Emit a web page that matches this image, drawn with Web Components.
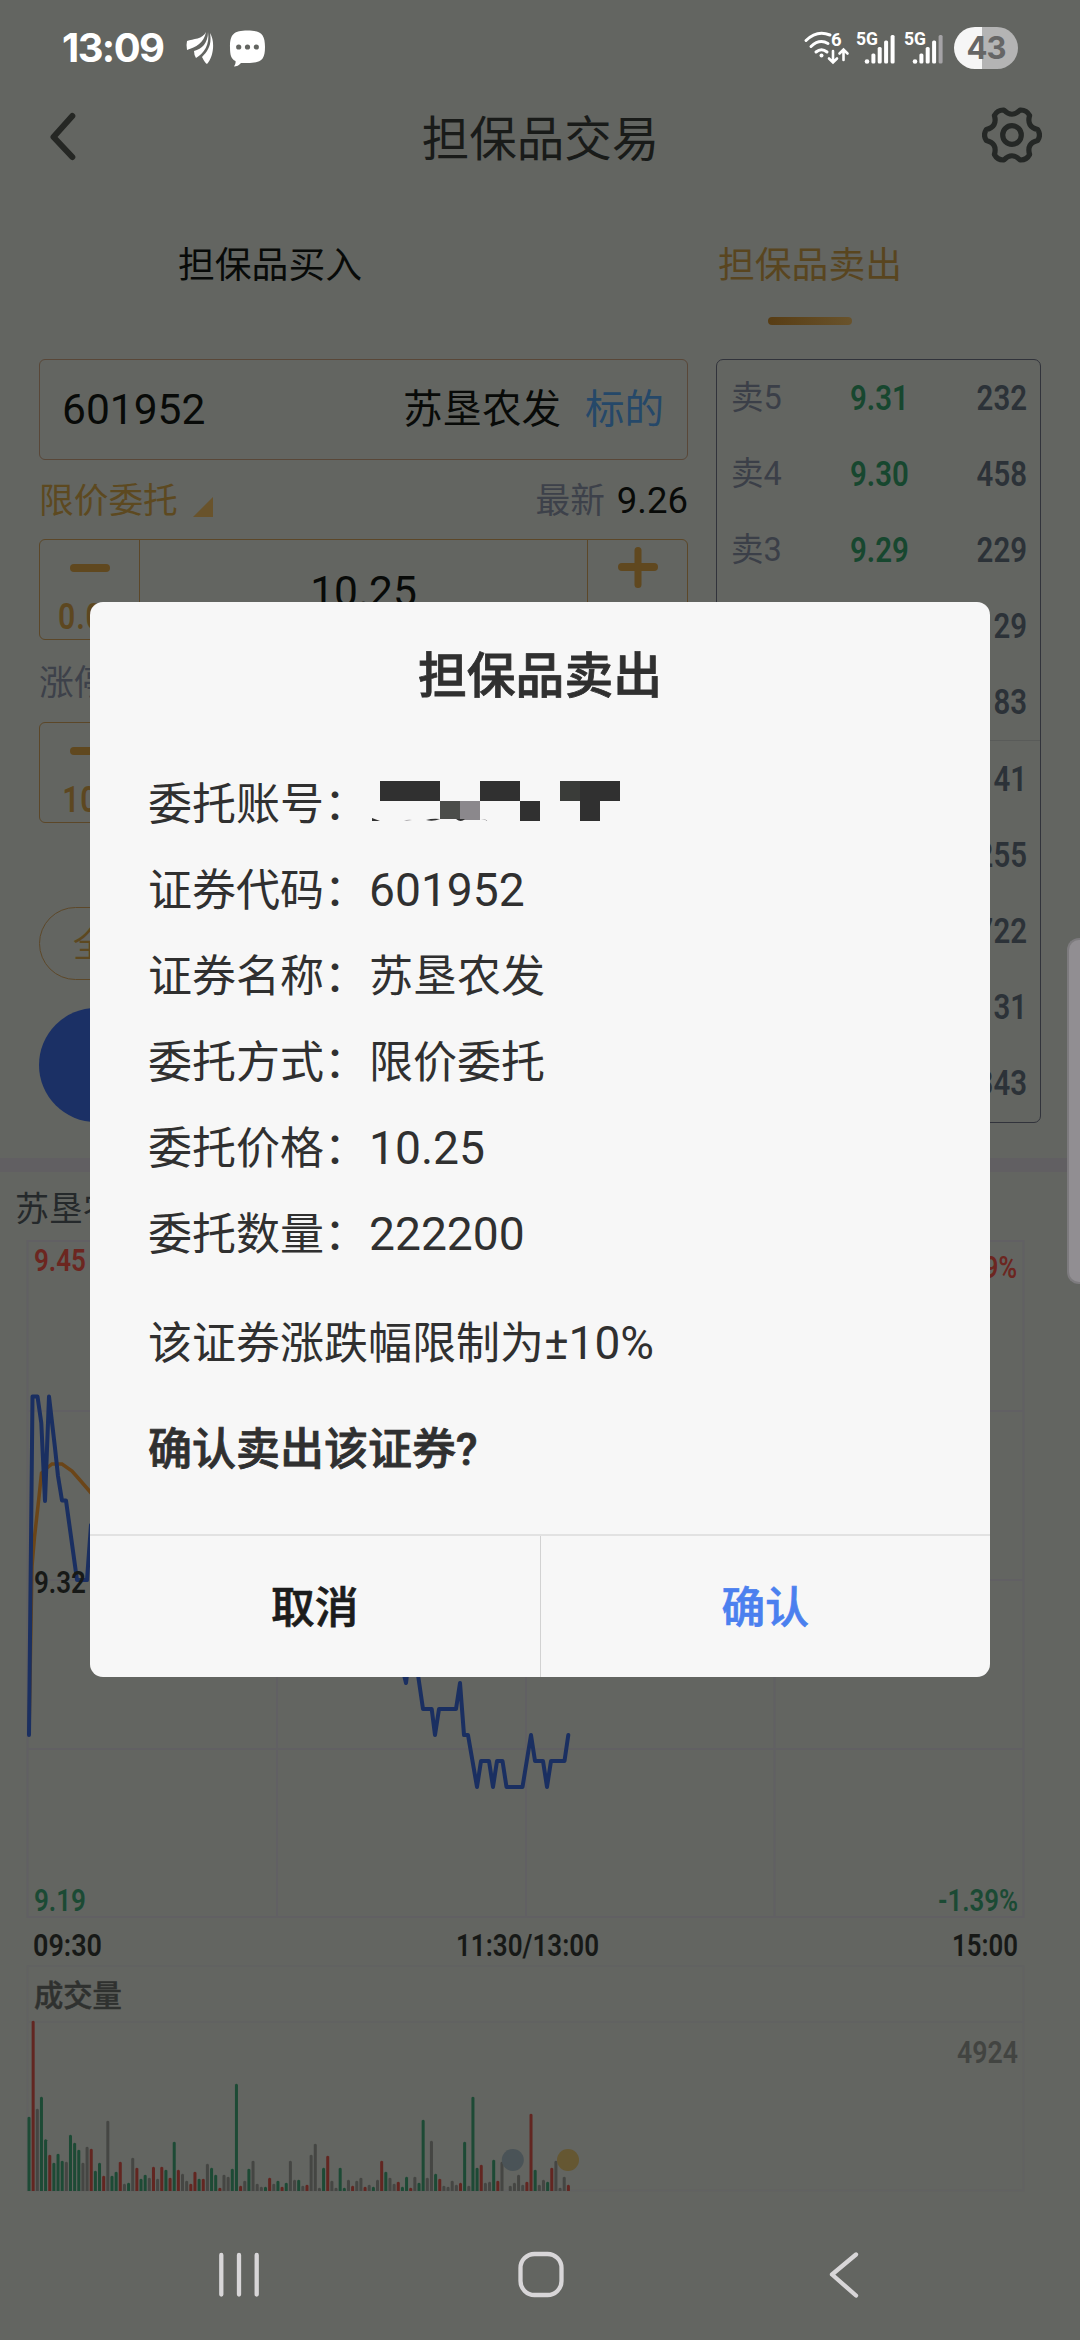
<!DOCTYPE html>
<html lang="zh-CN">
<head>
<meta charset="utf-8">
<title>担保品交易</title>
<style>
  body {
    margin: 0;
    width: 1080px;
    height: 2340px;
    overflow: hidden;
    background: #636561;
    font-family: Roboto, "Noto Sans CJK SC", sans-serif;
  }
</style>
</head>
<body>
<trade-app></trade-app>

<script>
const define = (name, template, setup) => {
  customElements.define(name, class extends HTMLElement {
    connectedCallback() {
      if (this.shadowRoot) return;
      this.attachShadow({ mode: 'open' }).innerHTML = template(this);
      if (setup) setup(this);
    }
  });
};

// narrow figures used for prices and volumes
define('slim-num', el => `
  <style>
    :host { display: inline-block; font-weight: 600; white-space: nowrap; }
    span {
      display: inline-block;
      transform: scaleX(0.84);
      transform-origin: ${el.getAttribute('origin') || 'left'} center;
    }
  </style>
  <span><slot></slot></span>
`);

define('signal-bars', el => `
  <style>
    :host { display: block; width: 40px; height: 34px; }
    svg { display: block; overflow: visible; }
  </style>
  <svg width="40" height="34" fill="#fff">
    <text x="0" y="14" font-family="Roboto" font-weight="700" font-size="18.5" textLength="22" lengthAdjust="spacingAndGlyphs">5G</text>
    <circle cx="11" cy="30.5" r="2.3"/>
    <rect x="15.4" y="22.5" width="4" height="10" rx="1.5"/>
    <rect x="21.7" y="16" width="4" height="16.5" rx="1.5"/>
    <rect x="28.1" y="9.5" width="4" height="23" rx="1.5"/>
    <rect x="34.6" y="4" width="4" height="28.5" rx="1.5" fill="${el.hasAttribute('weak') ? '#a5a3a6' : '#fff'}"/>
  </svg>
`);

define('status-bar', () => `
  <style>
    :host {
      display: flex;
      align-items: center;
      height: 96px;
      padding: 0 62px;
      box-sizing: border-box;
      color: #fff;
    }
    .time { font: 700 40px/48px Inter, Roboto, sans-serif; letter-spacing: -1.6px; width: 124px; }
    .chat { margin-left: 15px; }
    .wifi { margin-left: auto; overflow: visible; }
    signal-bars { margin-left: 8px; }
    .battery {
      width: 64px;
      height: 42px;
      margin-left: 10px;
      border-radius: 21px;
      background: linear-gradient(90deg, #f6f6f6 43%, #b4b4b4 43%);
      color: #666;
      font: 700 31px/42px Inter, Roboto, sans-serif;
      letter-spacing: -1px;
      text-align: center;
    }
  </style>
  <span class="time">13:09</span>
  <svg width="28" height="34" viewBox="0 0 28 34" fill="#fff">
    <path d="M20 1 C17 8 7 8 1 10 Q0 14 1 19 C10 16 18 12 20 1Z"/>
    <path d="M22 1 C22 12 16 18 8 20 Q8 24 10 27 C18 22 24 14 22 1Z"/>
    <path d="M24 2 C26 14 22 20 16 26 Q19 32 21 33 C28 25 29 10 24 2Z"/>
  </svg>
  <svg class="chat" width="37" height="37" viewBox="0 0 37 37">
    <path d="M18.5 0.5 C32 0.5 36 4 36 17 C36 30 32 33 18.5 33 C15 33 13 33 12 33 Q9 36.5 5 36.5 Q7 34 6.5 31 C2 29 1 25 1 17 C1 4 5 0.5 18.5 0.5Z" fill="#fff"/>
    <g fill="#636561"><circle cx="9.7" cy="17" r="2.6"/><circle cx="18.5" cy="17" r="2.6"/><circle cx="27.3" cy="17" r="2.6"/></g>
  </svg>
  <svg class="wifi" width="44" height="34" viewBox="0 0 44 34" fill="none" stroke="#fff" stroke-width="3" stroke-linecap="round">
    <path d="M2 9.5 Q13 -1.5 26 4"/>
    <path d="M7 15.5 Q15.5 7.5 24 12.5"/>
    <path d="M12 21 Q17.5 16.5 23 21"/>
    <circle cx="17.5" cy="24.5" r="2" fill="#fff" stroke="none"/>
    <path d="M29 20 V31 M25 27.5 L29 31.5 L33 27.5 M39.5 29 V19 M35.5 22.5 L39.5 18.5 L43.5 22.5" stroke-width="2.6"/>
    <text x="27" y="14.5" font-family="Roboto" font-weight="700" font-size="18.5" fill="#fff" stroke="none">6</text>
  </svg>
  <signal-bars></signal-bars>
  <signal-bars weak></signal-bars>
  <div class="battery">43</div>
`);

define('gear-icon', () => `
  <style>:host { display: block; height: 60px; } svg { display: block; }</style>
  <svg width="60" height="60" viewBox="-30 -29 60 60" fill="none" stroke="#252826" stroke-width="5.2" stroke-linejoin="round">
    <path/>
    <circle r="9.3"/>
  </svg>
`, el => {
  const at = (deg, r) => {
    const a = deg * Math.PI / 180;
    return `${(Math.cos(a) * r).toFixed(2)} ${(Math.sin(a) * r).toFixed(2)}`;
  };
  let d = `M${at(-12, 26.3)}`;
  for (let deg = 0; deg < 360; deg += 60) {
    d += `Q${at(deg, 29.2)} ${at(deg + 12, 26.3)}Q${at(deg + 30, 16.5)} ${at(deg + 48, 26.3)}`;
  }
  el.shadowRoot.querySelector('path').setAttribute('d', d + 'Z');
});

define('page-header', () => `
  <style>
    :host {
      display: grid;
      grid-template-columns: 60px 1fr 60px;
      align-items: center;
      height: 80px;
      padding: 0 38px 0 39px;
    }
    h1 { margin: 0; color: #191b19; font-size: 47.5px; font-weight: 400; line-height: 60px; text-align: center; padding-top: 7px; }
  </style>
  <svg width="60" height="60" viewBox="0 0 60 60" fill="none" stroke="#252724" stroke-width="6" stroke-linecap="round" stroke-linejoin="round">
    <path d="M33.3 10 L14.5 31 L33.3 51"/>
  </svg>
  <h1><slot></slot></h1>
  <gear-icon></gear-icon>
`);

define('trade-tab', el => `
  <style>
    :host {
      display: flex;
      flex-direction: column;
      align-items: center;
      flex: 1;
      padding-top: 65px;
      color: ${el.hasAttribute('active') ? '#59451f' : '#080a08'};
      font-size: 36.8px;
      line-height: 50px;
    }
    i {
      width: 84px;
      height: 8px;
      margin-top: 26px;
      border-radius: 4px;
      background: linear-gradient(90deg, #583d14, #69532c);
    }
  </style>
  <slot></slot>
  ${el.hasAttribute('active') ? '<i></i>' : ''}
`);

define('stock-field', () => `
  <style>
    :host {
      display: flex;
      align-items: center;
      height: 101px;
      box-sizing: border-box;
      padding: 0 23px 0 22px;
      border: 1.5px solid #594738;
      border-radius: 6px;
      color: #080a08;
      font-size: 39.5px;
      line-height: 96px;
    }
    .code { flex: 1; font-size: 42.5px; line-height: 102px; }
    .tag { margin-left: 24px; color: #254869; }
  </style>
  <span class="code"><slot name="code"></slot></span>
  <slot></slot>
  <span class="tag"><slot name="tag"></slot></span>
`);

define('field-label', () => `
  <style>
    :host {
      display: flex;
      align-items: center;
      box-sizing: border-box;
      padding-bottom: 3px;
      font-size: 34.7px;
      color: #3d414a;
    }
  </style>
  <slot></slot>
`);

define('price-stepper', el => `
  <style>
    :host {
      display: grid;
      grid-template-columns: 100px 1fr 100px;
      height: 101px;
      box-sizing: border-box;
      border: 1.5px solid #5c4728;
      border-radius: 6px;
      color: #5d4720;
      font-size: 36px;
    }
    .side { text-align: center; }
    .left { border-right: 1.5px solid #5c4728; }
    .right { border-left: 1.5px solid #5c4728; }
    svg { display: block; margin: 7px auto 0; }
    .num { margin-top: 7px; line-height: 42px; letter-spacing: 1px; }
    .value { color: #080a08; font-size: 42.5px; line-height: 103px; text-align: center; }
  </style>
  <div class="side left">
    <svg width="40" height="42" fill="#60481f"><rect y="17" width="40" height="8" rx="4"/></svg>
    <slim-num class="num" origin="center">${el.getAttribute('step')}</slim-num>
  </div>
  <div class="value">${el.getAttribute('value') || ''}</div>
  <div class="side right">
    <svg width="40" height="42" fill="#60481f"><rect y="16" width="40" height="8" rx="4"/><rect x="16.5" width="7" height="41" rx="3.5"/></svg>
  </div>
`);

define('order-book', () => `
  <style>
    :host {
      display: grid;
      grid-auto-rows: 76.2px;
      height: 764px;
      box-sizing: border-box;
      border: 1.5px solid #31333b;
      border-radius: 7px;
      font-size: 35px;
    }
    .row {
      display: grid;
      grid-template-columns: 119px 1fr 80px;
      align-items: center;
      padding: 0 13px 0 14px;
      color: #2c3238;
    }
    .row:nth-of-type(5) { border-bottom: 1.5px solid #595b59; }
    .label { padding-bottom: 8px; color: #3b3f48; font-size: 32.5px; }
    .price { color: #17472f; }
    .qty { text-align: right; }
  </style>
`, el => {
  // [level, price, quantity], sells above buys
  const rows = [
    ['卖5', '9.31', 232], ['卖4', '9.30', 458], ['卖3', '9.29', 229],
    ['', '', 29], ['', '', 83],
    ['', '', 41], ['', '', 255], ['', '', 722], ['', '', 31], ['', '', 343]
  ];
  el.shadowRoot.innerHTML += rows.map(([label, price, qty]) => `
    <div class="row">
      <span class="label">${label}</span>
      <slim-num class="price">${price}</slim-num>
      <slim-num class="qty" origin="right">${qty}</slim-num>
    </div>`).join('');
});

define('trade-panel', () => `
  <style>
    :host {
      display: grid;
      grid-template-columns: 649px 325px;
      column-gap: 28px;
      padding: 21px 39px 35px;
    }
    .form { display: flex; flex-direction: column; }
    .type { height: 79px; color: #5d4920; }
    .type svg { margin: 18px 0 0 15px; }
    .last { margin-left: auto; color: #3d414a; }
    .last b { margin-left: 12px; color: #080a08; font-weight: 400; font-size: 36.5px; }
    .limit { height: 82px; }
    .pill {
      width: 142px;
      height: 73px;
      margin-top: 84px;
      padding-left: 33px;
      box-sizing: border-box;
      border: 1.5px solid #5d4829;
      border-radius: 37px;
      color: #5d4820;
      font-size: 34.5px;
      line-height: 74px;
    }
    .submit { height: 114px; margin-top: 28px; border-radius: 57px; background: #1b3065; }
  </style>
  <div class="form">
    <stock-field><span slot="code">601952</span>苏垦农发<span slot="tag">标的</span></stock-field>
    <field-label class="type">
      限价委托
      <svg width="20" height="20"><path d="M20 0 V20 H0Z" fill="#69532b"/></svg>
      <span class="last">最新<b>9.26</b></span>
    </field-label>
    <price-stepper step="0.01" value="10.25"></price-stepper>
    <field-label class="limit">涨停</field-label>
    <price-stepper step="100"></price-stepper>
    <div class="pill">全</div>
    <div class="submit"></div>
  </div>
  <order-book></order-book>
`);

define('price-chart', () => `
  <style>
    :host { display: block; height: 806px; border-top: 14px solid #615f62; box-sizing: border-box; }
    .name { height: 68px; padding: 4px 0 0 15px; box-sizing: border-box; color: #25292b; font-size: 34px; line-height: 66px; }
    svg { display: block; font: 600 30.8px Roboto, sans-serif; }
  </style>
  <div class="name">苏垦农发</div>
  <svg width="1080" height="724" viewBox="0 1240 1080 724">
    <path d="M27.5 1241 H1023.5 V1917 H27.5Z M27.5 1411 H1023.5 M27.5 1580 H1023.5 M27.5 1749 H1023.5 M277 1241 V1917 M526 1241 V1917 M774.5 1241 V1917" fill="none" stroke="#616063" stroke-width="2"/>
    <path d="M29 1735 L32 1566 L34.5 1537 L39 1497 L41.5 1473 L47 1468 L52 1464 H62 L72 1471 L79 1479 L92 1494" fill="none" stroke="#6b4518" stroke-width="3.5"/>
    <path d="M29 1735 L32.5 1396.5 H37.5 L41.3 1423 L45 1501 L49 1396.5 L55 1448 L58 1476 L62 1500.5 H66 L77 1580 H87 L91 1525 L398 1650 L406 1683 L411 1640 L417 1668 L423 1709 H431.7 L435 1735 L439 1709 H456 L460 1683 L464 1735 H468 L477 1787 L481 1761 H489 L493 1787 L497 1761 H502.5 L506.5 1787 H522.5 L531 1735 L535 1761 H543 L547 1787 L551 1761 H564.5 L568.3 1735" fill="none" stroke="#1a2f61" stroke-width="4" stroke-linecap="round" stroke-linejoin="round"/>
    <g class="labels"></g>
  </svg>
`, el => {
  const red = '#6c2620', green = '#1b4a34', ink = '#171917';
  // text, left, baseline, width, colour
  const labels = [
    ['9.45', 34, 1271, 52, red], ['1.39%', 948, 1278, 69, red],
    ['9.32', 34, 1593, 52, ink],
    ['9.19', 34, 1911, 52, green], ['-1.39%', 938, 1911, 80, green],
    ['09:30', 33, 1956, 69, ink], ['11:30/13:00', 456, 1956, 143, ink], ['15:00', 952, 1956, 66, ink]
  ];
  el.shadowRoot.querySelector('.labels').innerHTML = labels.map(([t, x, y, w, c]) =>
    `<text x="${x}" y="${y}" textLength="${w}" lengthAdjust="spacingAndGlyphs" fill="${c}">${t}</text>`).join('');
});

define('volume-chart', () => `
  <style>
    :host { display: block; height: 236px; }
    svg { display: block; }
  </style>
  <svg width="1080" height="236" viewBox="0 1964 1080 236">
    <path d="M27.5 1966 H1023.5 V2190.5 H27.5Z M27.5 2022 H1023.5" fill="none" stroke="#616262" stroke-width="1.5"/>
    <g class="bars"></g>
    <circle cx="512.8" cy="2160" r="11" fill="#4a5357"/>
    <circle cx="568" cy="2160" r="11" fill="#655732"/>
    <text x="34" y="2006" font-family="Noto Sans CJK SC" font-weight="500" font-size="29.3" fill="#2f312f" stroke="#2f312f" stroke-width="0.5">成交量</text>
    <text x="957" y="2063" textLength="61" lengthAdjust="spacingAndGlyphs" font-family="Roboto" font-weight="600" font-size="30.8" fill="#424441">4924</text>
  </svg>
`, el => {
  // height of each minute's bar in thirds of a pixel: g falls, r rises, k is flat
  const volumes = `223g 511r 247k 283g 155g 109r 85g 112g 91g 88k 169g 145g 124g 85k 133k 127r 61g 85g 46r 211k
    46g 58g 88r 22k 25g 100k 70r 37g 49g 40k 73r 37k 73r 64g 40r 148g 64r 52k 31k 22r
    58r 37g 37r 82k 70g 49g 10r 49k 43k 67g 322g 16r 31k 67g 91k 22k 13k 13g 40r 22k
    31g 13r 25g 91k 34k 34g 16k 19r 109k 142k 10k 70g 106r 31k 10k 70g 10g 34k 16r 31k
    40k 13r 19k 13g 34k 91r 58g 40k 22k 28r 13g 43g 10r 43k 25g 214g 40k 151k 52g 37r
    16k 13k 31k 19k 25r 148g 16k 283g 70g 79r 25k 28k 94g 31r 88k 0k 16k 25k 49k 19k
    28r 232r 64g 19k 34k 28g 70r 91k 10k 43k 19r`.split(/\s+/);
  const colors = { g: '#1d4a35', r: '#622621', k: '#454643' };
  el.shadowRoot.querySelector('.bars').innerHTML = volumes.map((v, i) => {
    const h = parseInt(v) / 3;
    const x = 27.5 + i * 4.149;
    return h ? `<path d="M${x.toFixed(2)} 2191 v${-(h - 1).toFixed(2)} q1.5 -2 3 0 V2191Z" fill="${colors[v.slice(-1)]}"/>` : '';
  }).join('');
});

define('nav-bar', () => `
  <style>
    :host { display: grid; grid-template-columns: repeat(3, 1fr); width: 912px; height: 130px; margin: 10px auto 0; justify-items: center; align-items: center; }
    svg { display: block; fill: none; stroke: #d8d6d8; stroke-width: 4.3; stroke-linecap: round; stroke-linejoin: round; }
  </style>
  <svg width="50" height="50" viewBox="211 2255 50 50"><path d="M221.3 2260 V2299.5 M239 2260 V2299.5 M256.7 2260 V2299.5"/></svg>
  <svg width="50" height="50"><rect x="5.5" y="4" width="41" height="41" rx="14"/></svg>
  <svg width="50" height="50"><path d="M37 4.500 L13 24.500 L37 45.500"/></svg>
`);

define('edge-handle', () => `
  <style>
    :host {
      position: absolute;
      top: 938px;
      right: 0;
      width: 13px;
      height: 346px;
      box-sizing: border-box;
      border: 2px solid #7d7b7e;
      border-right: 0;
      border-radius: 12px 0 0 12px;
      background: #918e92;
    }
  </style>
`);

define('account-mosaic', () => `
  <style>:host { display: block; height: 42px; } svg { display: block; }</style>
  <svg width="260" height="42" viewBox="369 779 260 42" fill="#303030">
    <path d="M380 780h60v20h-60z M480 780h40v20h-40z M520 800h20v20h-20z M580 780h40v20h-20v20h-20z"/>
    <path d="M560 780h20v20h-20z" fill="#3a3c39"/>
    <path d="M440 800h20v18h-20z" fill="#4b4d4a"/>
    <path d="M460 800h20v19h-20z" fill="#8b888c"/>
    <path d="M372 817l8 3h-8z M426 819q7 -2 14 -1q-7 3 -14 1z M456 818h9q-4 4 -9 0z"/>
    <path d="M404 820q4 -2 8 -1z M481 818q4 0 8 2z" fill="#8b888c"/>
  </svg>
`);

define('order-row', el => `
  <style>
    :host { display: flex; align-items: center; height: 86px; }
    .label { width: 221px; }
    .figure { padding-top: 5px; font-size: 46.2px; }
  </style>
  <span class="label">${el.getAttribute('label')}：</span>
  <span class="${el.hasAttribute('figure') ? 'figure' : ''}"><slot></slot></span>
`);

define('confirm-dialog', el => `
  <style>
    :host {
      position: absolute;
      inset: 0;
      display: flex;
      justify-content: center;
      align-items: flex-start;
      padding-top: 602px;
      color: #303030;
      font-size: 44px;
    }
    .box {
      display: flex;
      flex-direction: column;
      width: 900px;
      height: 1075px;
      overflow: hidden;
      border-radius: 13px;
      background: #f7f7f7;
    }
    h2 {
      margin: 43px 0 0;
      font-size: 48.8px;
      font-weight: 500;
      line-height: 64px;
      text-align: center;
      -webkit-text-stroke: 0.8px;
    }
    .body { flex: 1; padding: 49px 58px 0; }
    .actions { display: flex; height: 141px; border-top: 2px solid #e2e2e2; }
    .actions span {
      flex: 1;
      color: #1c1c1c;
      font-size: 43.7px;
      font-weight: 500;
      line-height: 144px;
      text-align: center;
      -webkit-text-stroke: 0.7px;
    }
    .actions span + span { border-left: 1px solid #d2d2d2; color: #4b80ef; }
  </style>
  <div class="box">
    <h2>${el.getAttribute('heading')}</h2>
    <div class="body"><slot></slot></div>
    <div class="actions"><span>取消</span><span>确认</span></div>
  </div>
`);

define('trade-app', () => `
  <style>
    :host { display: block; position: relative; width: 1080px; height: 2340px; overflow: hidden; }
    .tabs { display: flex; height: 162px; }
    p { margin: 0; line-height: 60px; }
    .note { margin-top: 39px; }
    .note span { font-size: 46px; }
    .ask { margin-top: 46px; font-weight: 500; -webkit-text-stroke: 0.8px; }
  </style>
  <status-bar></status-bar>
  <page-header>担保品交易</page-header>
  <div class="tabs">
    <trade-tab>担保品买入</trade-tab>
    <trade-tab active>担保品卖出</trade-tab>
  </div>
  <trade-panel></trade-panel>
  <price-chart></price-chart>
  <volume-chart></volume-chart>
  <nav-bar></nav-bar>
  <edge-handle></edge-handle>
  <confirm-dialog heading="担保品卖出">
    <order-row label="委托账号"><account-mosaic></account-mosaic></order-row>
    <order-row label="证券代码" figure>601952</order-row>
    <order-row label="证券名称">苏垦农发</order-row>
    <order-row label="委托方式">限价委托</order-row>
    <order-row label="委托价格" figure>10.25</order-row>
    <order-row label="委托数量" figure>222200</order-row>
    <p class="note">该证券涨跌幅限制为<span>±10%</span></p>
    <p class="ask">确认卖出该证券?</p>
  </confirm-dialog>
`);
</script>
</body>
</html>
